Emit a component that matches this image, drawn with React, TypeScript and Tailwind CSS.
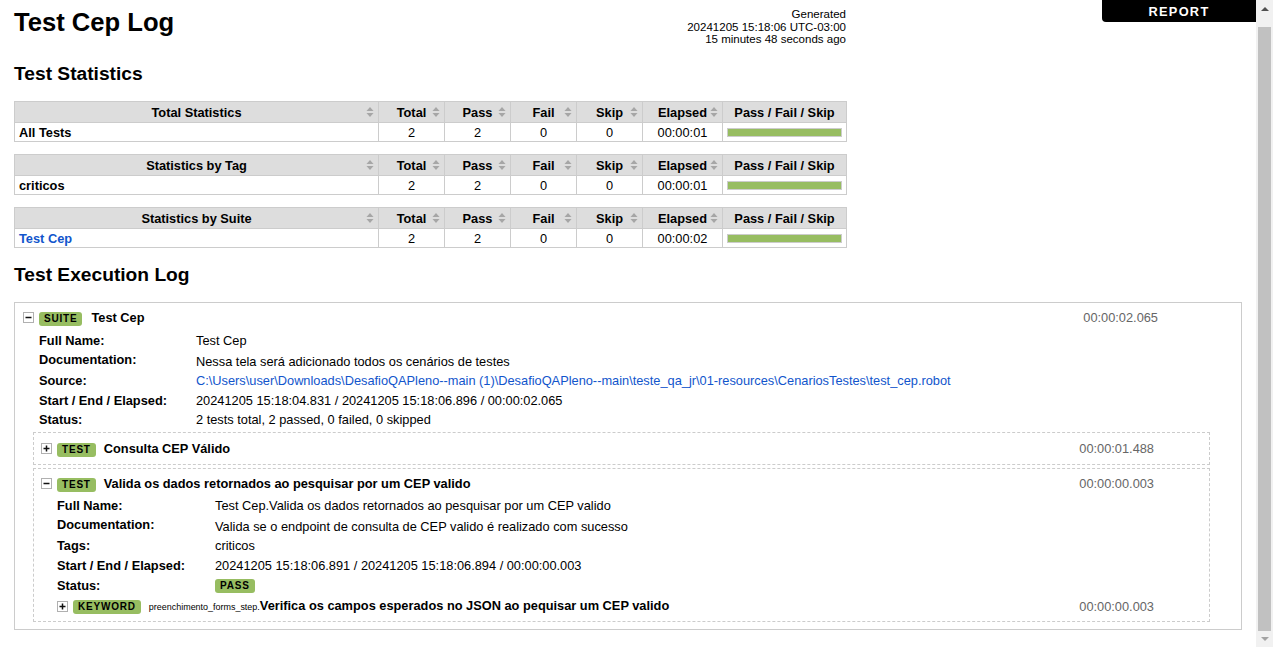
import React from "react";

const GRID = "grid w-fit grid-cols-[364px_66px_66px_66px_66px_80px_124px] border-l border-t border-[#cccccc]";

function SortIcon() {
  return (
    <svg width="8" height="11" viewBox="0 0 8 11" className="absolute right-[4px] top-1/2 -translate-y-1/2">
      <path d="M0.5 4.5L4 0.5L7.5 4.5Z" fill="#a6a6a6" />
      <path d="M0.5 6.5L4 10.5L7.5 6.5Z" fill="#a6a6a6" />
    </svg>
  );
}

function HeadCell({ children, sort = true }: { children: React.ReactNode; sort?: boolean }) {
  return (
    <div className="relative flex h-[21px] items-center justify-center border-b border-r border-[#cccccc] bg-[#dddddd] font-bold">
      <span>{children}</span>
      {sort && <SortIcon />}
    </div>
  );
}

function Cell({ children }: { children: React.ReactNode }) {
  return (
    <div className="flex h-[19px] items-center justify-center border-b border-r border-[#cccccc]">{children}</div>
  );
}

function StatTable({ title, name, link, elapsed, className }: { title: string; name: string; link?: boolean; elapsed: string; className: string }) {
  return (
    <div className={GRID + " " + className}>
      <HeadCell>{title}</HeadCell>
      <HeadCell>Total</HeadCell>
      <HeadCell>Pass</HeadCell>
      <HeadCell>Fail</HeadCell>
      <HeadCell>Skip</HeadCell>
      <HeadCell>Elapsed</HeadCell>
      <HeadCell sort={false}>Pass / Fail / Skip</HeadCell>
      <div className="flex h-[19px] items-center border-b border-r border-[#cccccc] px-[4px]">
        <span className={link ? "font-bold text-[#1155cc]" : "font-bold"}>{name}</span>
      </div>
      <Cell>2</Cell>
      <Cell>2</Cell>
      <Cell>0</Cell>
      <Cell>0</Cell>
      <Cell>{elapsed}</Cell>
      <div className="flex h-[19px] items-center border-b border-r border-[#cccccc] px-[4px]">
        <div className="h-[9px] w-full border border-[#cccccc] bg-[#97bd61]" />
      </div>
    </div>
  );
}

function Toggle({ open }: { open: boolean }) {
  return (
    <span className="inline-flex h-[11px] w-[11px] shrink-0 items-center justify-center border border-[#b0b0b0] bg-white">
      <svg width="9" height="9" viewBox="0 0 9 9">
        <rect x="1.5" y="3.75" width="6" height="1.5" fill="#111" />
        {!open && <rect x="3.75" y="1.5" width="1.5" height="6" fill="#111" />}
      </svg>
    </span>
  );
}

function Label({ children }: { children: React.ReactNode }) {
  return (
    <span className="inline-block shrink-0 rounded-[3px] bg-[#97bd61] px-[5px] py-[2px] text-[10px] font-bold leading-[10px] tracking-[0.8px] text-black">
      {children}
    </span>
  );
}

function MetaRow({ label, children, h, labelW, shift }: { label: string; children: React.ReactNode; h: string; labelW: string; shift?: boolean }) {
  return (
    <div className={"flex items-center " + h}>
      <div className={"shrink-0 font-bold " + labelW + (shift ? " mb-[2px]" : "")}>{label}</div>
      <div className={shift ? "mt-[2px]" : ""}>{children}</div>
    </div>
  );
}

export default function App() {
  return (
    <div className="flex h-[647px] w-[1273px] overflow-hidden bg-white text-[12.8px] leading-[15px] text-black font-['Liberation_Sans',Arial,Helvetica,sans-serif]">
      <div className="relative w-[1256px] shrink-0 px-[14px] pt-[8px]">
        <div className="absolute right-0 top-0 flex h-[22px] w-[154px] items-center justify-center rounded-bl-[4px] bg-black font-bold tracking-[1.28px] text-white">
          REPORT
        </div>

        <div className="flex h-[54px] w-[832px] justify-between">
          <h1 className="text-[25.6px] font-bold leading-[29px]">Test Cep Log</h1>
          <div className="whitespace-nowrap text-right text-[11.52px] leading-[12.5px]">
            <div>Generated</div>
            <div>20241205 15:18:06 UTC-03:00</div>
            <div>15 minutes 48 seconds ago</div>
          </div>
        </div>

        <h2 className="mb-[17px] mt-[1px] text-[19.2px] font-bold leading-[22px]">Test Statistics</h2>

        <StatTable title="Total Statistics" name="All Tests" elapsed="00:00:01" className="-mt-[1px] mb-[12px]" />
        <StatTable title="Statistics by Tag" name="criticos" elapsed="00:00:01" className="mb-[12px]" />
        <StatTable title="Statistics by Suite" name="Test Cep" link elapsed="00:00:02" className="mb-[16px]" />

        <h2 className="mb-[16px] text-[19.2px] font-bold leading-[22px]">Test Execution Log</h2>

        <div className="border border-[#cccccc] pb-[7px]">
          <div className="mt-[1px] flex h-[27px] items-center pl-[8px] pr-[83px]">
            <Toggle open />
            <span className="ml-[5px]"><Label>SUITE</Label></span>
            <span className="ml-[9px] font-bold">Test Cep</span>
            <span className="ml-auto text-[#666666]">00:00:02.065</span>
          </div>
          <div className="pl-[24px]">
            <MetaRow label="Full Name:" h="h-[19px]" labelW="w-[157px]">Test Cep</MetaRow>
            <MetaRow label="Documentation:" h="h-[21px]" labelW="w-[157px]" shift>
              Nessa tela será adicionado todos os cenários de testes
            </MetaRow>
            <MetaRow label="Source:" h="h-[19px]" labelW="w-[157px]">
              <span className="text-[#1155cc]">
                C:\Users\user\Downloads\DesafioQAPleno--main (1)\DesafioQAPleno--main\teste_qa_jr\01-resources\CenariosTestes\test_cep.robot
              </span>
            </MetaRow>
            <MetaRow label="Start / End / Elapsed:" h="h-[20px]" labelW="w-[157px]">
              20241205 15:18:04.831 / 20241205 15:18:06.896 / 00:00:02.065
            </MetaRow>
            <MetaRow label="Status:" h="h-[19px]" labelW="w-[157px]">
              2 tests total, 2 passed, 0 failed, 0 skipped
            </MetaRow>
          </div>

          <div className="ml-[18px] mr-[31px] mt-[3px] border border-dashed border-[#cccccc]">
            <div className="flex h-[31px] items-center pl-[7px] pr-[55px]">
              <Toggle open={false} />
              <span className="ml-[5px]"><Label>TEST</Label></span>
              <span className="ml-[8px] font-bold">Consulta CEP Válido</span>
              <span className="ml-auto text-[#666666]">00:00:01.488</span>
            </div>
          </div>

          <div className="ml-[18px] mr-[31px] mt-[3px] border border-dashed border-[#cccccc] pb-[4px]">
            <div className="flex h-[27px] items-center pl-[7px] pr-[55px] pt-[2px]">
              <Toggle open />
              <span className="ml-[5px]"><Label>TEST</Label></span>
              <span className="ml-[8px] font-bold">Valida os dados retornados ao pesquisar por um CEP valido</span>
              <span className="ml-auto text-[#666666]">00:00:00.003</span>
            </div>
            <div className="pl-[23px]">
              <MetaRow label="Full Name:" h="h-[19px]" labelW="w-[158px]">
                Test Cep.Valida os dados retornados ao pesquisar por um CEP valido
              </MetaRow>
              <MetaRow label="Documentation:" h="h-[21px]" labelW="w-[158px]" shift>
                Valida se o endpoint de consulta de CEP valido é realizado com sucesso
              </MetaRow>
              <MetaRow label="Tags:" h="h-[19px]" labelW="w-[158px]">criticos</MetaRow>
              <MetaRow label="Start / End / Elapsed:" h="h-[20px]" labelW="w-[158px]">
                20241205 15:18:06.891 / 20241205 15:18:06.894 / 00:00:00.003
              </MetaRow>
              <MetaRow label="Status:" h="h-[20px]" labelW="w-[158px]">
                <Label>PASS</Label>
              </MetaRow>
            </div>
            <div className="flex h-[22px] items-center pl-[23px] pr-[55px]">
              <Toggle open={false} />
              <span className="ml-[5px]"><Label>KEYWORD</Label></span>
              <span className="ml-[8px] whitespace-nowrap">
                <span className="text-[8.96px]">preenchimento_forms_step.</span>
                <span className="font-bold">Verifica os campos esperados no JSON ao pequisar um CEP valido</span>
              </span>
              <span className="ml-auto text-[#666666]">00:00:00.003</span>
            </div>
          </div>
        </div>
      </div>

      <div className="flex w-[17px] shrink-0 flex-col bg-[#f1f1f1]">
        <div className="flex h-[17px] items-center justify-center">
          <svg width="8" height="4" viewBox="0 0 8 4">
            <path d="M0 4L4 0L8 4Z" fill="#505050" />
          </svg>
        </div>
        <div className="mx-[2px] mt-[10px] h-[604px] bg-[#c1c1c1]" />
        <div className="flex h-[16px] items-center justify-center">
          <svg width="8" height="4" viewBox="0 0 8 4">
            <path d="M0 0L4 4L8 0Z" fill="#a3a3a3" />
          </svg>
        </div>
      </div>
    </div>
  );
}
